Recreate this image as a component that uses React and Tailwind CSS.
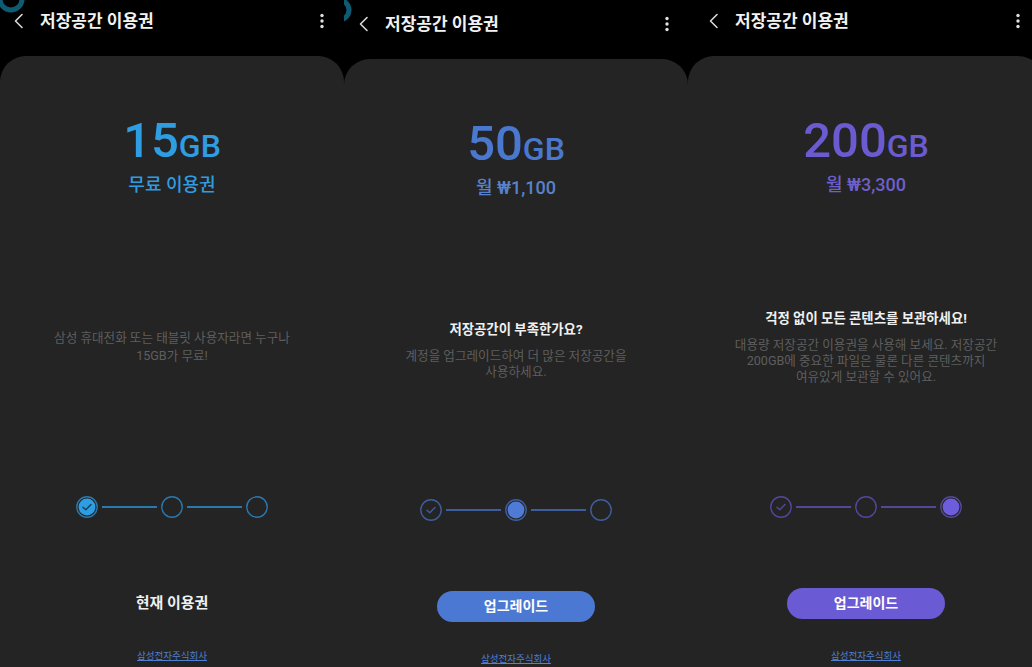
import React from 'react'

const FONT = { fontFamily: 'Roboto, "Noto Sans CJK KR", sans-serif' }

function Chevron() {
  return (
    <svg width="10" height="16" viewBox="0 0 10 16" className="shrink-0">
      <polyline points="8,1.5 1.5,8 8,14.5" fill="none" stroke="#d8d8d8" strokeWidth="1.6" strokeLinecap="round" strokeLinejoin="round" />
    </svg>
  )
}

function Kebab() {
  return (
    <svg width="6" height="16" viewBox="0 0 6 16">
      <circle cx="3" cy="2.5" r="1.7" fill="#e0e0e0" />
      <circle cx="3" cy="8" r="1.7" fill="#e0e0e0" />
      <circle cx="3" cy="13.5" r="1.7" fill="#e0e0e0" />
    </svg>
  )
}

function Step({ kind, stroke, fill, check }) {
  const filled = kind === 'active' || kind === 'activeDone'
  return (
    <svg width="22" height="22" viewBox="0 0 22 22" className="shrink-0">
      <circle cx="11" cy="11" r="10.2" fill="none" stroke={stroke} strokeWidth="1.4" />
      {filled && <circle cx="11" cy="11" r="8.4" fill={fill} />}
      {(kind === 'done' || kind === 'activeDone') && (
        <polyline points="7,11.2 9.8,13.8 15,8.4" fill="none" stroke={check} strokeWidth="1.4" strokeLinecap="round" strokeLinejoin="round" />
      )}
    </svg>
  )
}

function Stepper({ steps, stroke, fill, check }) {
  return (
    <div className="flex items-center justify-center">
      <Step kind={steps[0]} stroke={stroke} fill={fill} check={check} />
      <div className="mx-[4px] h-[1.5px] w-[55px]" style={{ background: stroke }} />
      <Step kind={steps[1]} stroke={stroke} fill={fill} check={check} />
      <div className="mx-[4px] h-[1.5px] w-[55px]" style={{ background: stroke }} />
      <Step kind={steps[2]} stroke={stroke} fill={fill} check={check} />
    </div>
  )
}

const panels = [
  {
    size: '15',
    sub: '무료 이용권',
    color: '#2f9de2',
    subColor: '#2f9de2',
    stroke: '#2a78ad',
    fill: '#2f9de2',
    check: '#16405e',
    steps: ['activeDone', 'empty', 'empty'],
    heading: null,
    lines: ['삼성 휴대전화 또는 태블릿 사용자라면 누구나', '15GB가 무료!'],
    lh: 'leading-[18px]',
    bottom: 'current',
    wrap: 'w-[344px]',
    head: 'pl-[14px] pr-[19px]',
  },
  {
    size: '50',
    sub: '월 ₩1,100',
    color: '#4b78cf',
    subColor: '#5a82cc',
    stroke: '#3d5e9e',
    fill: '#4f7ad6',
    check: '#3d5e9e',
    steps: ['done', 'active', 'empty'],
    heading: '저장공간이 부족한가요?',
    lines: ['계정을 업그레이드하여 더 많은 저장공간을', '사용하세요.'],
    lh: 'leading-[16px]',
    bottom: 'button',
    btn: '#4a78d3',
    wrap: 'w-[344px] pt-[3px]',
    head: 'pl-[15px] pr-[18px]',
  },
  {
    size: '200',
    sub: '월 ₩3,300',
    color: '#6b5bd0',
    subColor: '#6e60cc',
    stroke: '#52489a',
    fill: '#6d5ddc',
    check: '#52489a',
    steps: ['done', 'empty', 'active'],
    heading: '걱정 없이 모든 콘텐츠를 보관하세요!',
    lines: ['대용량 저장공간 이용권을 사용해 보세요. 저장공간', '200GB에 중요한 파일은 물론 다른 콘텐츠까지', '여유있게 보관할 수 있어요.'],
    lh: 'leading-[16px]',
    bottom: 'button',
    btn: '#6a5ad3',
    wrap: 'w-[356px]',
    head: 'pl-[21px] pr-[23px]',
  },
]

function Panel({ p }) {
  return (
    <div className={`relative flex h-[667px] shrink-0 flex-col bg-black ${p.wrap}`}>
      <div className={`flex h-[56px] items-start pt-[9px] ${p.head}`}>
        <div className="flex h-[24px] items-center">
          <Chevron />
        </div>
        <div className="ml-[16px] text-[17px] font-bold leading-[24px] text-[#f2f2f2]">저장공간 이용권</div>
        <div className="ml-auto flex h-[24px] items-center">
          <Kebab />
        </div>
      </div>
      <div className="flex flex-1 flex-col items-center rounded-t-[26px] bg-[#242424]">
        <div className="mt-[57px] flex h-[56px] items-baseline leading-[56px]" style={{ color: p.color }}>
          <span className="text-[49px] font-medium">{p.size}</span>
          <span className="text-[32px] font-medium">GB</span>
        </div>
        <div className="mt-[4px] text-[18px] font-medium leading-[24px]" style={{ color: p.subColor }}>
          {p.sub}
        </div>
        <div className="flex h-[300px] flex-col items-center justify-center text-center">
          {p.heading && (
            <div className="mb-[9px] text-[13.4px] font-bold leading-[18px] text-[#f0f0f0]">{p.heading}</div>
          )}
          <div className={`text-[12.6px] ${p.lh} text-[#5e5e5e]`}>
            {p.lines.map((l) => (
              <div key={l} className="whitespace-nowrap">{l}</div>
            ))}
          </div>
        </div>
        <div className="flex h-[20px] items-center">
          <Stepper steps={p.steps} stroke={p.stroke} fill={p.fill} check={p.check} />
        </div>
        <div className="mt-[71px] flex h-[31px] items-center justify-center">
          {p.bottom === 'current' ? (
            <span className="text-[15px] font-bold text-[#f0f0f0]">현재 이용권</span>
          ) : (
            <div className="flex h-[31px] w-[158px] items-center justify-center rounded-full text-[14px] font-bold text-white" style={{ background: p.btn }}>
              업그레이드
            </div>
          )}
        </div>
        <div className="mt-[30px] text-[9.5px] leading-[14px] text-[#4f80d2] underline">삼성전자주식회사</div>
      </div>
    </div>
  )
}

export default function App() {
  return (
    <div className="relative flex h-[667px] w-[1032px] overflow-hidden bg-black" style={FONT}>
      {panels.map((p) => (
        <Panel key={p.size} p={p} />
      ))}
      <svg className="absolute left-0 top-0" width="30" height="24" viewBox="0 0 30 24">
        <circle cx="11" cy="-1" r="11" fill="none" stroke="#0e5b74" strokeWidth="5" />
      </svg>
      <svg className="absolute left-[344px] top-0" width="12" height="30" viewBox="0 0 12 30">
        <circle cx="-5" cy="10" r="10" fill="none" stroke="#0e5b74" strokeWidth="5" />
      </svg>
    </div>
  )
}
